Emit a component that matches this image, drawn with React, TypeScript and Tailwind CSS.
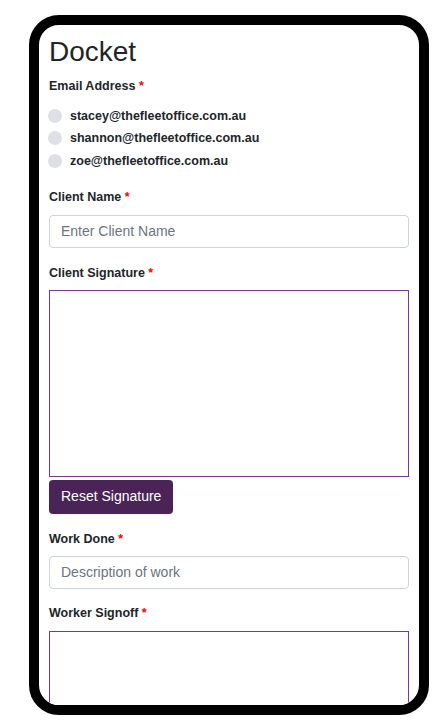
import React from 'react';

const emails = [
  'stacey@thefleetoffice.com.au',
  'shannon@thefleetoffice.com.au',
  'zoe@thefleetoffice.com.au',
];

const Label = ({ text, className = '' }: { text: string; className?: string }) => (
  <div className={`text-[12.5px] leading-[18px] font-bold text-[#212529] ${className}`}>
    {text} <span className="text-[#ff0000]">*</span>
  </div>
);

const TextInput = ({ placeholder }: { placeholder: string }) => (
  <input
    type="text"
    placeholder={placeholder}
    className="block w-full h-[33px] px-[11px] text-[14px] text-[#212529] placeholder:text-[#6c757d] border border-[#ced4da] rounded-[4px] bg-white outline-none"
  />
);

const SignaturePad = () => (
  <div className="w-full h-[187px] border border-[#6f3c96] bg-white shrink-0" />
);

export default function App() {
  return (
    <div className="w-[442px] h-[723px] bg-white overflow-hidden" style={{ fontFamily: '"Liberation Sans", Arial, sans-serif' }}>
      <div className="ml-[29px] mt-[15px] w-[400px] h-[700px] border-[10px] border-black rounded-[30px] overflow-hidden bg-white">
        <div className="px-[10px] pt-[10px] flex flex-col">
          <h1 className="text-[28px] leading-[34px] text-[#212529]">Docket</h1>

          <Label text="Email Address" className="mt-[8px]" />
          <div className="mt-[9.5px] flex flex-col">
            {emails.map((email) => (
              <label key={email} className="h-[22.5px] flex items-center gap-[8px]">
                <span className="w-[14px] h-[14px] rounded-full bg-[#dde1e6] shrink-0 -ml-[1px]" />
                <span className="text-[12.5px] leading-[18px] font-bold text-[#212529]">{email}</span>
              </label>
            ))}
          </div>

          <Label text="Client Name" className="mt-[16px]" />
          <div className="mt-[8.5px]">
            <TextInput placeholder="Enter Client Name" />
          </div>

          <Label text="Client Signature" className="mt-[16px]" />
          <div className="mt-[8px]">
            <SignaturePad />
          </div>
          <div className="mt-[3px]">
            <button className="h-[34px] px-[12px] rounded-[4px] bg-[#4a2456] text-white text-[14px]">
              Reset Signature
            </button>
          </div>

          <Label text="Work Done" className="mt-[16px]" />
          <div className="mt-[8px]">
            <TextInput placeholder="Description of work" />
          </div>

          <Label text="Worker Signoff" className="mt-[15px]" />
          <div className="mt-[9px]">
            <SignaturePad />
          </div>
        </div>
      </div>
    </div>
  );
}
